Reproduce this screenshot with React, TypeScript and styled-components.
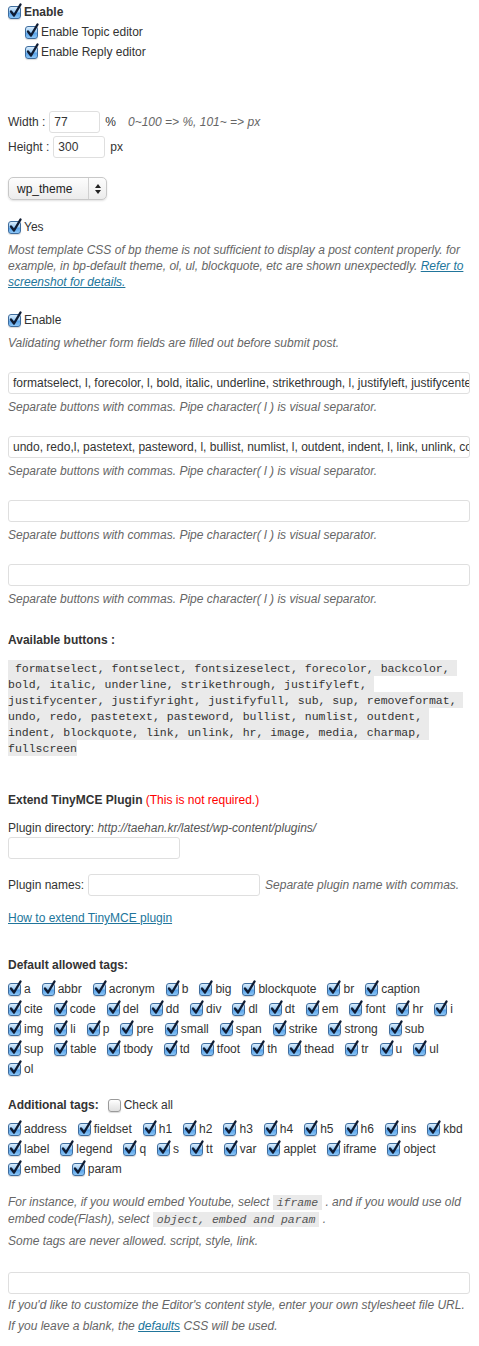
import React from "react";
import styled, { createGlobalStyle } from "styled-components";

const GlobalStyle = createGlobalStyle`
  html, body {
    margin: 0;
    padding: 0;
    background: #fff;
  }
  body {
    font-family: "Liberation Sans", Arial, Helvetica, sans-serif;
    font-size: 12px;
    color: #333;
  }
`;

const Page = styled.div`
  width: 462px;
  padding: 2px 9px 14px 8px;
`;

const Block = styled.div<{ $top?: number }>`
  margin-top: ${(p) => p.$top ?? 0}px;
`;

const CheckRow = styled.label<{ $indent?: number; $top?: number; $bold?: boolean }>`
  display: flex;
  align-items: center;
  height: 20px;
  margin-left: ${(p) => p.$indent ?? 0}px;
  margin-top: ${(p) => p.$top ?? 0}px;
  font-weight: ${(p) => (p.$bold ? 700 : 400)};
`;

const BoxWrap = styled.span<{ $checked: boolean }>`
  position: relative;
  display: inline-block;
  flex: none;
  width: 11px;
  height: 11px;
  margin-right: 3px;
  border: 1px solid ${(p) => (p.$checked ? "#3f6d9e" : "#9a9a9a")};
  border-radius: 3px;
  background: ${(p) =>
    p.$checked
      ? "linear-gradient(#d9edfd 0%, #9ccbf4 45%, #5aa3ea 55%, #8cc6f6 100%)"
      : "linear-gradient(#ffffff 0%, #eeeeee 50%, #e0e0e0 100%)"};
  box-shadow: 0 1px 1px rgba(0, 0, 0, 0.15);
`;

const Tick = styled.svg`
  position: absolute;
  left: 0px;
  top: -4px;
  overflow: visible;
`;

const Checkbox = ({ checked = true }: { checked?: boolean }) => (
  <BoxWrap $checked={checked}>
    {checked && (
      <Tick width="13" height="15" viewBox="0 0 13 15">
        <path
          d="M2 8.5 L5 12.5 L11.5 1.5"
          fill="none"
          stroke="#0f1c33"
          strokeWidth="2.4"
          strokeLinecap="round"
          strokeLinejoin="round"
        />
      </Tick>
    )}
  </BoxWrap>
);

const FieldRow = styled.div<{ $top?: number }>`
  display: flex;
  align-items: center;
  height: 22px;
  margin-top: ${(p) => p.$top ?? 0}px;
`;

const Input = styled.div<{ $width?: number; $left?: number }>`
  box-sizing: border-box;
  width: ${(p) => (p.$width ? `${p.$width}px` : "100%")};
  height: 22px;
  margin-left: ${(p) => p.$left ?? 0}px;
  padding: 0 4px;
  border: 1px solid #dfdfdf;
  border-radius: 3px;
  background: #fff;
  color: #333;
  line-height: 20px;
  white-space: nowrap;
  overflow: hidden;
  flex: none;
`;

const Unit = styled.span<{ $left?: number }>`
  margin-left: ${(p) => p.$left ?? 5}px;
`;

const Hint = styled.span<{ $left?: number }>`
  margin-left: ${(p) => p.$left ?? 12}px;
  font-style: italic;
  color: #666;
`;

const SelectBox = styled.div`
  display: flex;
  align-items: center;
  box-sizing: border-box;
  width: 99px;
  height: 23px;
  margin-top: 19px;
  border: 1px solid #c8c8c8;
  border-radius: 5px;
  background: linear-gradient(#fdfdfd, #ececec);
  box-shadow: 0 1px 2px rgba(0, 0, 0, 0.12);
  color: #222;
`;

const SelectText = styled.span`
  flex: 1;
  padding-left: 8px;
`;

const SelectArrow = styled.span`
  display: flex;
  align-items: center;
  justify-content: center;
  width: 17px;
  height: 100%;
  border-left: 1px solid #d0d0d0;
`;

const Desc = styled.p<{ $top?: number }>`
  margin: ${(p) => p.$top ?? 5}px 0 0;
  font-style: italic;
  color: #666;
  line-height: 16px;
`;

const Link = styled.a`
  color: #21759b;
  text-decoration: underline;
`;

const Heading = styled.div<{ $top?: number }>`
  margin-top: ${(p) => p.$top ?? 0}px;
  font-weight: 700;
  line-height: 16px;
`;

const Required = styled.span`
  color: #f00;
  font-weight: 400;
`;

const Plain = styled.div<{ $top?: number }>`
  margin-top: ${(p) => p.$top ?? 0}px;
  line-height: 16px;
`;

const Url = styled.span`
  font-style: italic;
  color: #555;
`;

const CodeBlock = styled.div`
  width: 458px;
  margin-top: 12px;
  line-height: 16px;
  font-family: "Liberation Mono", "DejaVu Sans Mono", monospace;
  font-size: 11.5px;
  color: #333;
`;

const CodeText = styled.code`
  font-family: inherit;
  background: #eaeaea;
  padding: 1.5px 0;
  white-space: pre-wrap;
`;

const InlineCode = styled.code`
  font-family: "Liberation Mono", "DejaVu Sans Mono", monospace;
  font-size: 11.5px;
  font-style: italic;
  background: #eaeaea;
  padding: 1px 4px;
  color: #555;
`;

const TagGrid = styled.div<{ $top?: number }>`
  display: flex;
  flex-wrap: wrap;
  column-gap: 11px;
  width: 456px;
  margin-top: ${(p) => p.$top ?? 0}px;
`;

const TagItem = styled.label`
  display: flex;
  align-items: center;
  height: 20px;
`;

const HeadRow = styled.div<{ $top?: number }>`
  display: flex;
  align-items: center;
  height: 20px;
  margin-top: ${(p) => p.$top ?? 0}px;
`;

const HeadLabel = styled.span`
  font-weight: 700;
  margin-right: 9px;
`;

const defaultTags = [
  "a", "abbr", "acronym", "b", "big", "blockquote", "br", "caption",
  "cite", "code", "del", "dd", "div", "dl", "dt", "em", "font", "hr", "i",
  "img", "li", "p", "pre", "small", "span", "strike", "strong", "sub",
  "sup", "table", "tbody", "td", "tfoot", "th", "thead", "tr", "u", "ul",
  "ol",
];

const additionalTags = [
  "address", "fieldset", "h1", "h2", "h3", "h4", "h5", "h6", "ins", "kbd",
  "label", "legend", "q", "s", "tt", "var", "applet", "iframe", "object",
  "embed", "param",
];

const buttonRows = [
  "formatselect, l, forecolor, l, bold, italic, underline, strikethrough, l, justifyleft, justifycenter, justifyright",
  "undo, redo,l, pastetext, pasteword, l, bullist, numlist, l, outdent, indent, l, link, unlink, code, l, fullscreen",
  "",
  "",
];

const available =
  " formatselect, fontselect, fontsizeselect, forecolor, backcolor, bold, italic, underline, strikethrough, justifyleft, justifycenter, justifyright, justifyfull, sub, sup, removeformat, undo, redo, pastetext, pasteword, bullist, numlist, outdent, indent, blockquote, link, unlink, hr, image, media, charmap, fullscreen";

export default function App() {
  return (
    <>
      <GlobalStyle />
      <Page>
        <CheckRow $bold>
          <Checkbox />
          Enable
        </CheckRow>
        <CheckRow $indent={17}>
          <Checkbox />
          Enable Topic editor
        </CheckRow>
        <CheckRow $indent={17}>
          <Checkbox />
          Enable Reply editor
        </CheckRow>

        <FieldRow $top={49}>
          Width :
          <Input $width={51} $left={4}>77</Input>
          <Unit>%</Unit>
          <Hint>0~100 =&gt; %, 101~ =&gt; px</Hint>
        </FieldRow>
        <FieldRow $top={3}>
          Height :
          <Input $width={52} $left={4}>300</Input>
          <Unit>px</Unit>
        </FieldRow>

        <SelectBox>
          <SelectText>wp_theme</SelectText>
          <SelectArrow>
            <svg width="6" height="10" viewBox="0 0 6 10">
              <path d="M3 0 L6 4 L0 4 Z M0 6 L6 6 L3 10 Z" fill="#222" />
            </svg>
          </SelectArrow>
        </SelectBox>

        <CheckRow $top={17}>
          <Checkbox />
          Yes
        </CheckRow>
        <Desc>
          Most template CSS of bp theme is not sufficient to display a post
          content properly. for example, in bp-default theme, ol, ul,
          blockquote, etc are shown unexpectedly.{" "}
          <Link href="#">Refer to screenshot for details.</Link>
        </Desc>

        <CheckRow $top={20}>
          <Checkbox />
          Enable
        </CheckRow>
        <Desc>Validating whether form fields are filled out before submit post.</Desc>

        {buttonRows.map((value, index) => (
          <Block $top={21} key={index}>
            <Input>{value}</Input>
            <Desc>
              Separate buttons with commas. Pipe character( l ) is visual
              separator.
            </Desc>
          </Block>
        ))}

        <Heading $top={25}>Available buttons :</Heading>
        <CodeBlock>
          <CodeText>{available}</CodeText>
        </CodeBlock>

        <Heading $top={36}>
          Extend TinyMCE Plugin <Required>(This is not required.)</Required>
        </Heading>
        <Plain $top={12}>
          Plugin directory: <Url>http://taehan.kr/latest/wp-content/plugins/</Url>
        </Plain>
        <Block $top={1}>
          <Input $width={172} />
        </Block>
        <FieldRow $top={15}>
          Plugin names:
          <Input $width={172} $left={4} />
          <Hint $left={5}>Separate plugin name with commas.</Hint>
        </FieldRow>
        <Plain $top={14}>
          <Link href="#">How to extend TinyMCE plugin</Link>
        </Plain>

        <Heading $top={31}>Default allowed tags:</Heading>
        <TagGrid $top={6}>
          {defaultTags.map((tag) => (
            <TagItem key={tag}>
              <Checkbox />
              {tag}
            </TagItem>
          ))}
        </TagGrid>

        <HeadRow $top={16}>
          <HeadLabel>Additional tags:</HeadLabel>
          <Checkbox checked={false} />
          Check all
        </HeadRow>
        <TagGrid $top={4}>
          {additionalTags.map((tag) => (
            <TagItem key={tag}>
              <Checkbox />
              {tag}
            </TagItem>
          ))}
        </TagGrid>

        <Desc $top={15}>
          For instance, if you would embed Youtube, select{" "}
          <InlineCode>iframe</InlineCode> . and if you would use old embed
          code(Flash), select <InlineCode>object, embed and param</InlineCode> .
        </Desc>
        <Desc>Some tags are never allowed. script, style, link.</Desc>

        <Block $top={23}>
          <Input />
        </Block>
        <Desc $top={3}>
          If you'd like to customize the Editor's content style, enter your own
          stylesheet file URL.
        </Desc>
        <Desc>
          If you leave a blank, the <Link href="#">defaults</Link> CSS will be
          used.
        </Desc>
      </Page>
    </>
  );
}
